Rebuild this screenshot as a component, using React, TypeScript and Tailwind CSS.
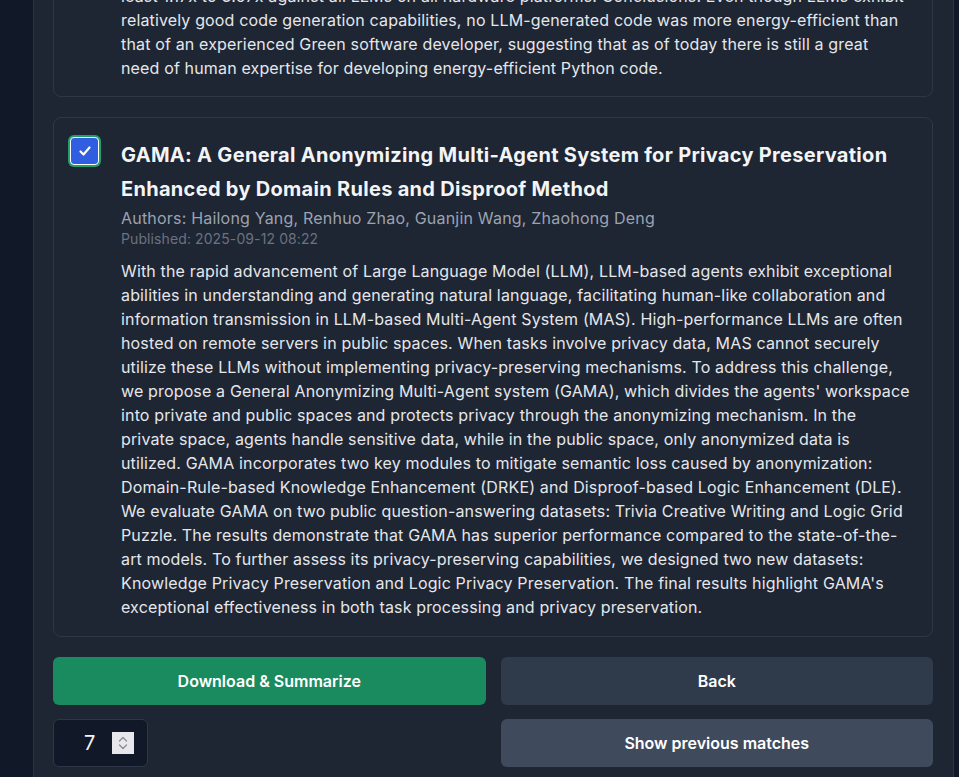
import React from 'react';

const prevLines = [
  'least 1.17x to 3.67x against all LLMs on all hardware platforms. Conclusions: Even though LLMs exhibit',
  'relatively good code generation capabilities, no LLM-generated code was more energy-efficient than',
  'that of an experienced Green software developer, suggesting that as of today there is still a great',
  'need of human expertise for developing energy-efficient Python code.',
];

const abstractLines = [
  'With the rapid advancement of Large Language Model (LLM), LLM-based agents exhibit exceptional',
  'abilities in understanding and generating natural language, facilitating human-like collaboration and',
  'information transmission in LLM-based Multi-Agent System (MAS). High-performance LLMs are often',
  'hosted on remote servers in public spaces. When tasks involve privacy data, MAS cannot securely',
  'utilize these LLMs without implementing privacy-preserving mechanisms. To address this challenge,',
  "we propose a General Anonymizing Multi-Agent system (GAMA), which divides the agents' workspace",
  'into private and public spaces and protects privacy through the anonymizing mechanism. In the',
  'private space, agents handle sensitive data, while in the public space, only anonymized data is',
  'utilized. GAMA incorporates two key modules to mitigate semantic loss caused by anonymization:',
  'Domain-Rule-based Knowledge Enhancement (DRKE) and Disproof-based Logic Enhancement (DLE).',
  'We evaluate GAMA on two public question-answering datasets: Trivia Creative Writing and Logic Grid',
  'Puzzle. The results demonstrate that GAMA has superior performance compared to the state-of-the-',
  'art models. To further assess its privacy-preserving capabilities, we designed two new datasets:',
  "Knowledge Privacy Preservation and Logic Privacy Preservation. The final results highlight GAMA's",
  'exceptional effectiveness in both task processing and privacy preservation.',
];

const Abstract = ({ lines }: { lines: string[] }) => (
  <div className="text-base leading-6 tracking-[0.15px] text-[#e5e7eb] whitespace-nowrap">
    {lines.map((l, i) => (
      <div key={i}>{l}</div>
    ))}
  </div>
);

const Checked = () => (
  <div className="w-[33px] h-8 -mt-[3px] -ml-[1px] shrink-0 rounded-[6px] bg-[#22a06b] p-[2px]">
    <div className="w-full h-full rounded-[4px] border border-white bg-[#2f5fe0] flex items-center justify-center">
      <svg width="14" height="14" viewBox="0 0 14 14" fill="none">
        <path d="M2.5 7.5 L5.5 10.5 L11.5 3.5" stroke="white" strokeWidth="2.2" strokeLinecap="round" strokeLinejoin="round" />
      </svg>
    </div>
  </div>
);

export default function App() {
  return (
    <div className="w-[959px] h-[777px] overflow-hidden bg-[#111827] flex" style={{ fontFamily: 'Inter, "Noto Sans", sans-serif' }}>
      <div className="w-[33px] shrink-0" />
      <div className="w-[921px] shrink-0 bg-[#1e2533] border-x border-[#2a3344] pl-[19px] pr-5 flex flex-col gap-5">
        <div className="-mt-[37px] rounded-lg border border-[#2e3748] pl-[15px] pr-5 pt-5 pb-4 flex gap-5">
          <div className="w-8 shrink-0" />
          <Abstract lines={prevLines} />
        </div>

        <div className="rounded-lg border border-[#2e3748] pl-[15px] pr-5 pt-5 pb-[17px] flex gap-5">
          <Checked />
          <div className="flex flex-col">
            <h2 className="text-[20px] leading-[34px] tracking-[0.3px] font-bold text-[#f3f4f6] whitespace-nowrap">
              <div>GAMA: A General Anonymizing Multi-Agent System for Privacy Preservation</div>
              <div>Enhanced by Domain Rules and Disproof Method</div>
            </h2>
            <p className="text-base leading-6 tracking-[0.2px] text-[#9ca3af]">Authors: Hailong Yang, Renhuo Zhao, Guanjin Wang, Zhaohong Deng</p>
            <p className="text-sm leading-[18px] tracking-[0.1px] text-[#6b7280]">Published: 2025-09-12 08:22</p>
            <div className="mt-[11px]">
              <Abstract lines={abstractLines} />
            </div>
          </div>
        </div>

        <div className="flex flex-col gap-3.5">
          <div className="grid grid-cols-2 gap-[15px]">
            <button className="h-12 rounded-md bg-[#1a8a5f] text-white font-semibold text-base">Download &amp; Summarize</button>
            <button className="h-12 rounded-md bg-[#2f3a4b] text-white font-semibold text-base">Back</button>
          </div>
          <div className="grid grid-cols-2 gap-[15px]">
            <div>
              <div className="w-[95px] h-12 rounded-md bg-[#111827] border border-[#2e3748] flex items-center pl-[30px] gap-[17px]">
                <span className="text-xl text-[#f3f4f6]">7</span>
                <div className="w-[22px] h-[22px] bg-[#e8e8ec] flex flex-col items-center justify-center gap-[2px]">
                  <svg width="10" height="6" viewBox="0 0 10 6" fill="none">
                    <path d="M1.5 5 L5 1.5 L8.5 5" stroke="#8e8e99" strokeWidth="1.4" strokeLinecap="round" strokeLinejoin="round" />
                  </svg>
                  <svg width="10" height="6" viewBox="0 0 10 6" fill="none">
                    <path d="M1.5 1 L5 4.5 L8.5 1" stroke="#8e8e99" strokeWidth="1.4" strokeLinecap="round" strokeLinejoin="round" />
                  </svg>
                </div>
              </div>
            </div>
            <button className="h-12 rounded-md bg-[#3f4a5c] text-white font-semibold text-base">Show previous matches</button>
          </div>
        </div>
      </div>
    </div>
  );
}
